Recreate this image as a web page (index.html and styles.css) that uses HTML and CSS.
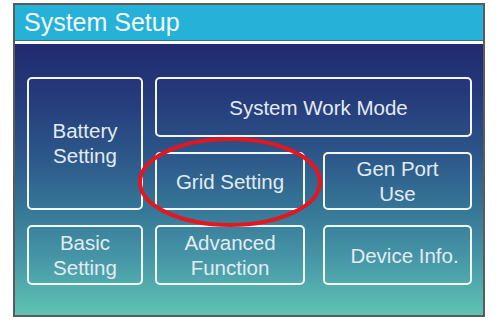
FILE: index.html
```html
<!DOCTYPE html>
<html>
<head>
<meta charset="utf-8">
<link rel="stylesheet" href="styles.css">
</head>
<body>
<div class="frame">
  <div class="header">System Setup</div>
  <div class="content">
    <div class="grid">
      <div class="btn battery">Battery<br>Setting</div>
      <div class="btn work">System Work Mode</div>
      <div class="btn grid-set">Grid Setting</div>
      <div class="btn gen">Gen Port<br>Use</div>
      <div class="btn basic">Basic<br>Setting</div>
      <div class="btn adv">Advanced<br>Function</div>
      <div class="btn dev">Device Info.</div>
    </div>
    <svg class="mark" width="194" height="100" viewBox="0 0 194 100">
      <ellipse cx="97" cy="50" rx="90" ry="43" fill="none" stroke="#e4161f" stroke-width="4"/>
    </svg>
  </div>
</div>
</body>
</html>
```
FILE: styles.css
```css
html, body {
  margin: 0;
  padding: 0;
  background: #ffffff;
}
body {
  font-family: "Liberation Sans", Arial, sans-serif;
}
.frame {
  margin: 3px 0 0 13px;
  width: 468px;
  height: 310px;
  border: 2px solid #5b5b5b;
  display: flex;
  flex-direction: column;
}
.header {
  height: 35px;
  line-height: 35px;
  background: #25b1d8;
  color: #f4fbff;
  font-size: 25px;
  padding-left: 9px;
  border-bottom: 1px solid #3d6d80;
}
.content {
  position: relative;
  flex: 1;
  border-top: 3px solid #ffffff;
  background: linear-gradient(#212a6f 0%, #263d7c 22%, #2c5589 40%, #357596 60%, #4594a6 78%, #5fc3b3 100%);
  padding: 33px 0 0 12px;
}
.grid {
  display: grid;
  grid-template-columns: 116px 150px 155px;
  grid-template-rows: 60px 58px 60px;
  column-gap: 12px;
  row-gap: 15px;
}
.btn {
  box-sizing: border-box;
  border: 2px solid #f2f6f8;
  border-radius: 5px;
  color: #e2ebf2;
  font-size: 20.5px;
  line-height: 25px;
  display: flex;
  align-items: center;
  justify-content: center;
  text-align: center;
}
.battery {
  grid-column: 1;
  grid-row: 1 / 3;
  padding-bottom: 2px;
}
.work {
  grid-column: 2 / 4;
  grid-row: 1;
  padding-left: 10px;
}
.grid-set {
  grid-column: 2;
  grid-row: 2;
}
.gen {
  grid-column: 3;
  grid-row: 2;
  width: 149px;
  justify-self: end;
}
.basic {
  grid-column: 1;
  grid-row: 3;
}
.adv {
  grid-column: 2;
  grid-row: 3;
}
.dev {
  grid-column: 3;
  grid-row: 3;
  width: 149px;
  justify-self: end;
  padding-left: 14px;
}
.mark {
  position: absolute;
  left: 118px;
  top: 88px;
}
```
